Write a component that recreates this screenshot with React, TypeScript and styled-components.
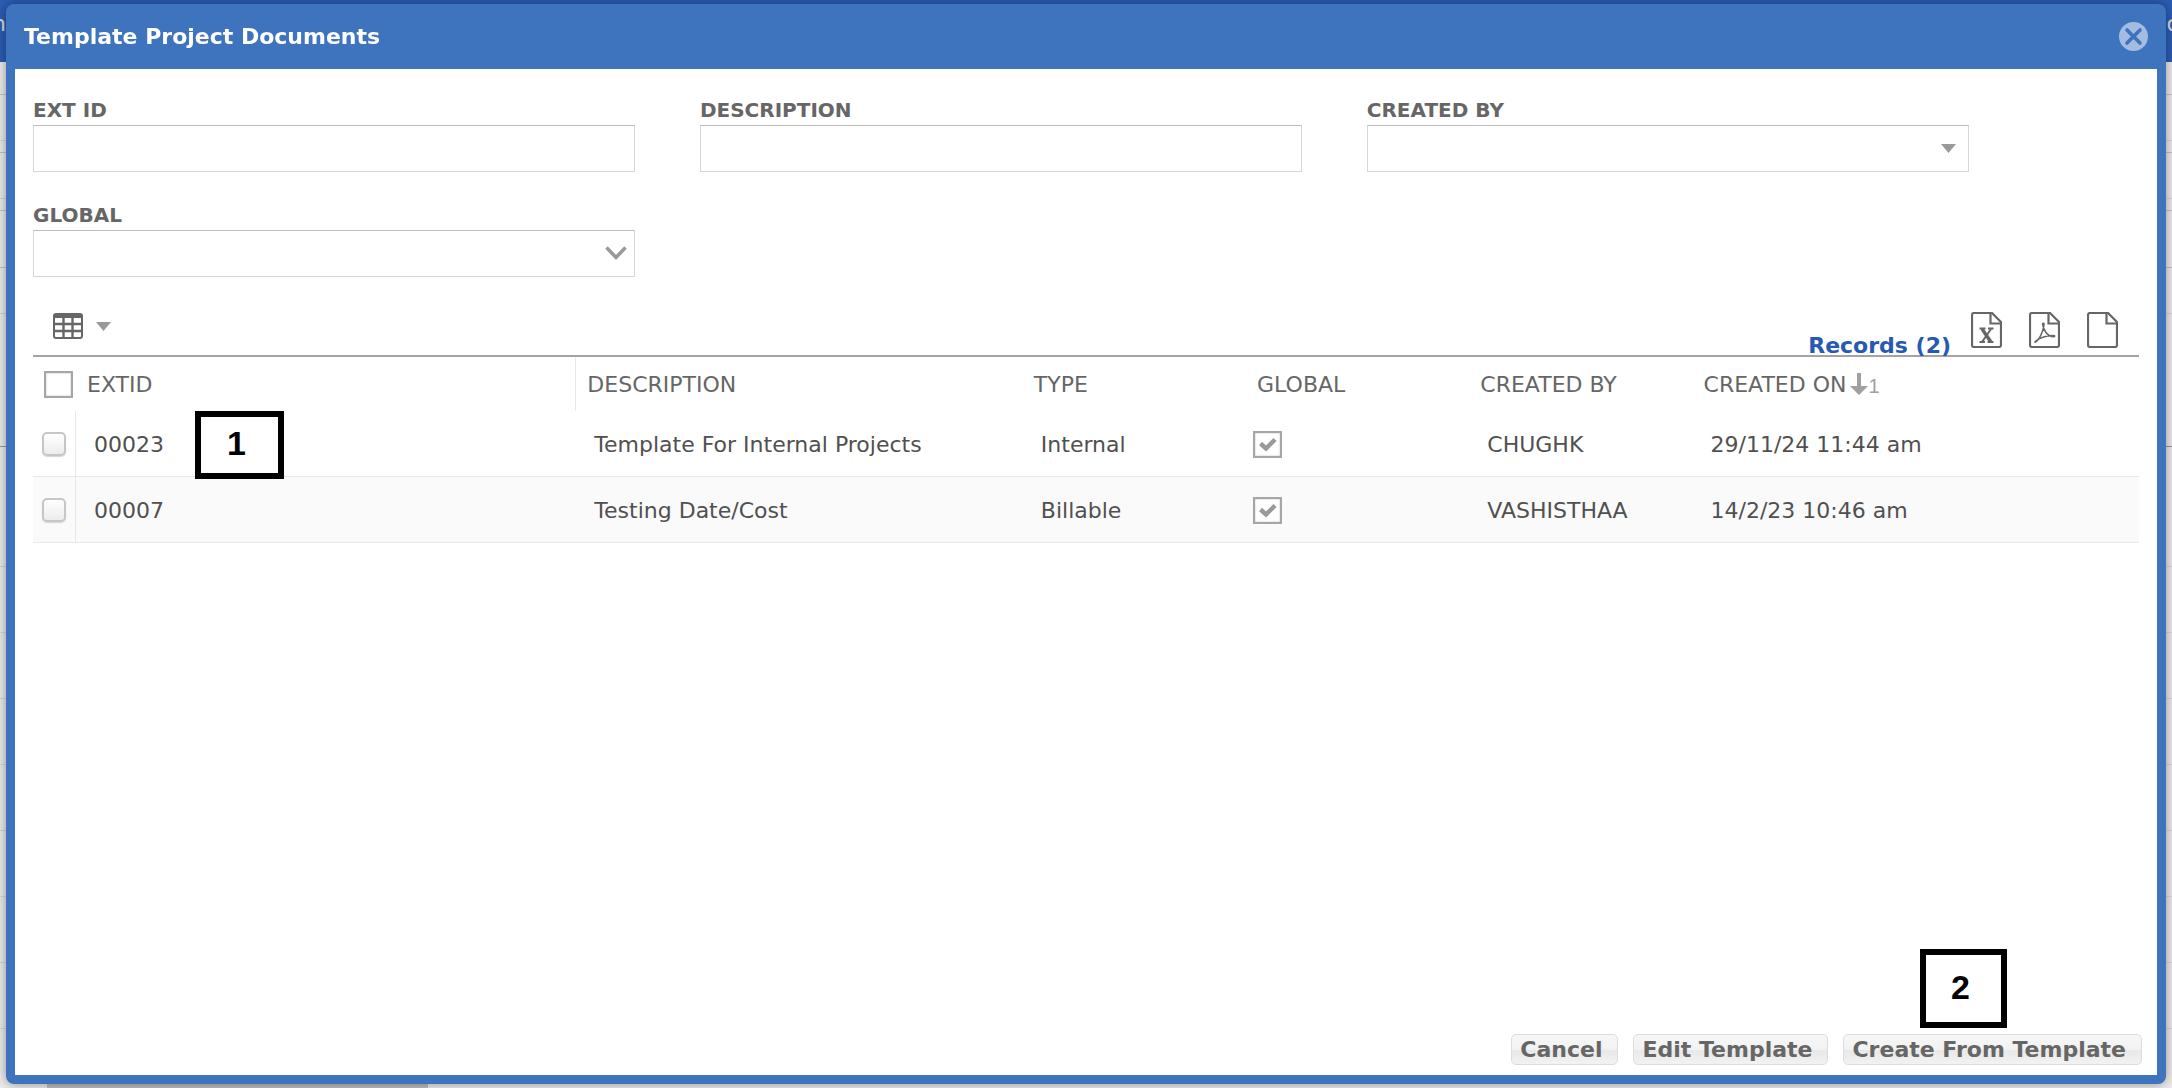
import React from "react";
import styled, { createGlobalStyle } from "styled-components";

const Global = createGlobalStyle`
  * { box-sizing: border-box; }
  body {
    margin: 0;
    overflow: hidden;
    font-family: Verdana, "DejaVu Sans", sans-serif;
    font-size: 22px;
    color: #505050;
    background: #ececec;
  }
  button, input, select { font: inherit; color: inherit; }
`;

/* ---------- page behind the dialog ---------- */
const Page = styled.div`
  height: 100vh;
  display: flex;
  flex-direction: column;
  overflow: hidden;
`;
const PageBar = styled.div`
  flex: none;
  display: flex;
  justify-content: space-between;
  height: 62px;
  margin: 0 -8px;
  padding-top: 10px;
  background: #2a5db5;
  line-height: 28px;
  color: #ddd;
`;
const PageLine = styled.div<{ $h: number; $c?: string }>`
  flex: none;
  height: ${(p) => p.$h}px;
  border-bottom: 1px solid ${(p) => p.$c || "#c4c4c4"};
`;
const PageScroll = styled.div`
  flex: none;
  width: 381px;
  height: 8px;
  margin: auto 0 0 47px;
  background: #bdbdbd;
`;

/* ---------- dialog frame ---------- */
const Dialog = styled.section`
  position: fixed;
  inset: 4px 6px;
  display: flex;
  flex-direction: column;
  padding: 0 9px 9px;
  border-radius: 8px;
  background: #3e73bd;
  box-shadow: 0 0 12px rgba(0, 0, 0, 0.4);
`;
const TitleBar = styled.header`
  flex: none;
  display: flex;
  align-items: center;
  justify-content: space-between;
  height: 65px;
  padding: 0 9px;
`;
const Title = styled.h1`
  margin: 0;
  font-size: 22px;
  line-height: 26px;
  font-weight: bold;
  color: #fff;
`;
const IconButton = styled.button`
  display: flex;
  align-items: center;
  gap: 13px;
  padding: 0;
  border: 0;
  background: none;
  cursor: pointer;
`;
const Body = styled.div`
  flex: 1;
  display: flex;
  flex-direction: column;
  padding: 29px 18px 0;
  background: #fff;
`;

/* ---------- filters ---------- */
const Filters = styled.form`
  display: grid;
  grid-template-columns: repeat(3, 1fr);
  gap: 31px 65px;
  width: 95%;
  padding-right: 65px;
`;
const Field = styled.label`
  display: grid;
  gap: 3px;
  font-size: 20px;
  line-height: 24px;
  font-weight: bold;
  color: #666;
`;
const Input = styled.input`
  width: 100%;
  height: 47px;
  padding: 0 10px;
  border: 1px solid #d6d6d6;
  border-top-color: #bdbdbd;
  border-radius: 0;
  background: #fff;
`;
const SelectBox = styled.span<{ $inset: number }>`
  display: grid;
  align-items: center;
  > * { grid-area: 1 / 1; }
  > svg {
    justify-self: end;
    margin-right: ${(p) => p.$inset}px;
    pointer-events: none;
  }
`;
const Select = styled(Input).attrs({ as: "select" })`
  appearance: none;
`;

/* ---------- list ---------- */
const Toolbar = styled.div`
  display: flex;
  align-items: flex-end;
  justify-content: space-between;
  height: 80px;
  padding: 0 21px 0 20px;
  border-bottom: 2px solid #a3a3a5;
`;
const ViewMenu = styled(IconButton)`
  margin-bottom: 16px;
`;
const Exports = styled.div`
  display: flex;
  align-items: flex-end;
  gap: 27px;
`;
const Records = styled.a`
  margin-right: -7px;
  font-weight: bold;
  line-height: 18px;
  color: #265ab2;
  text-decoration: none;
`;
const FileButton = styled(IconButton)`
  margin-bottom: 7px;
`;
const Table = styled.table`
  width: 100%;
  table-layout: fixed;
  border-spacing: 0;
`;
const Col = styled.col<{ $w?: string }>`
  width: ${(p) => p.$w || "auto"};
`;
const Th = styled.th<{ $split?: boolean }>`
  height: 54px;
  padding: 0 0 0 11px;
  border-right: ${(p) => (p.$split ? "1px solid #e8e8e8" : "0")};
  font-weight: normal;
  text-align: left;
  color: #666;
  white-space: nowrap;
`;
const HeadCell = styled.span<{ $gap: number }>`
  display: flex;
  align-items: center;
  gap: ${(p) => p.$gap}px;
`;
const Order = styled.span`
  display: inline-flex;
  align-items: flex-end;
  font-family: "Liberation Sans", Arial, sans-serif;
  font-size: 20px;
  line-height: 18px;
  color: #a0a0a0;
`;
const Row = styled.tr`
  &:nth-child(even) { background: #fafafa; }
`;
const Td = styled.td<{ $pick?: boolean; $tight?: boolean }>`
  position: relative;
  height: 66px;
  padding: 1px 0 0 ${(p) => (p.$pick ? 9 : p.$tight ? 7 : 18)}px;
  border-bottom: 1px solid #e8e8e8;
  border-right: ${(p) => (p.$pick ? "1px solid #e8e8e8" : "0")};
  white-space: nowrap;
`;
const Tick = styled.input.attrs({ type: "checkbox" })`
  appearance: none;
  display: block;
  width: 29px;
  height: 27px;
  margin: 0;
  border: 2px solid #a6a6a6;
  background: #fff;
  box-shadow: inset 0 0 2px #bbb;
`;
const RowTick = styled(Tick)`
  width: 24px;
  height: 24px;
  border: 2px solid #c6c6c6;
  border-radius: 5px;
  background: linear-gradient(#fff, #ececec);
  box-shadow: 0 1px 1px #d4d4d4;
`;
const Flag = styled.span`
  display: inline-grid;
  place-items: center;
  vertical-align: middle;
  > * { grid-area: 1 / 1; }
  > svg { pointer-events: none; }
`;

/* ---------- footer ---------- */
const Footer = styled.footer`
  flex: none;
  display: flex;
  justify-content: flex-end;
  gap: 15px;
  padding: 0 15px 10px;
  background: #fff;
`;
const Action = styled.button`
  height: 31px;
  padding: 0 15px 0 8px;
  border: 1px solid #dcdcdc;
  border-radius: 5px;
  background: linear-gradient(#f7f7f7, #f2f2f2 50%, #e8e8e8 51%, #f2f2f2);
  font-weight: bold;
  line-height: 28px;
  color: #666;
  white-space: nowrap;
`;
const Anchor = styled.div`
  position: relative;
`;

/* Numbered step markers lying over the dialog. */
const Marker = styled.span`
  position: absolute;
  display: grid;
  place-items: center;
  border: 6px solid #000;
  background: #fff;
  font-family: "Liberation Sans", Arial, sans-serif;
  font-size: 34px;
  font-weight: bold;
  line-height: 38px;
  color: #000;
  z-index: 1;
`;
const RowMarker = styled(Marker)`
  top: 0;
  left: 119px;
  width: 89px;
  height: 68px;
  padding: 0 6px 4px 0;
`;
const ActionMarker = styled(Marker)`
  right: 135px;
  bottom: 37px;
  width: 87px;
  height: 79px;
  padding: 0 6px 4px 0;
`;

const Caret = () => (
  <svg width="15" height="9" viewBox="0 0 15 9" aria-hidden="true">
    <path d="M0 0h15L7.500 9z" fill="#999" />
  </svg>
);
const Chevron = () => (
  <svg width="22" height="16" viewBox="0 0 22 16" aria-hidden="true">
    <path d="M1.500 1.500L11 11.500l9.500-10" fill="none" stroke="#999" strokeWidth="3.400" />
  </svg>
);
const CloseIcon = () => (
  <svg width="29" height="29" viewBox="0 0 29 29" aria-hidden="true">
    <circle cx="14.500" cy="14.500" r="14.500" fill="#a3bce0" />
    <path d="M8 8l13 13M21 8L8 21" stroke="#3e73bd" strokeWidth="3.600" strokeLinecap="round" />
  </svg>
);
const GridIcon = () => (
  <svg width="30" height="26" viewBox="0 0 30 26" aria-hidden="true">
    <rect x="1" y="1" width="28" height="24" rx="2" fill="#fff" stroke="#666" strokeWidth="2" />
    <path d="M1 3h28" stroke="#666" strokeWidth="4" />
    <path d="M1 11h28M1 18h28M10.500 4v21M19.500 4v21" stroke="#666" strokeWidth="2.400" />
  </svg>
);
const FileIcon = ({ kind }: { kind: "xls" | "pdf" | "blank" }) => (
  <svg width="31" height="36" viewBox="0 0 31 36" fill="none" stroke="#666" aria-hidden="true">
    <path d="M3 1h18l9 9v23a2 2 0 0 1-2 2H3a2 2 0 0 1-2-2V3a2 2 0 0 1 2-2z" strokeWidth="2.200" />
    <path d="M19.500 1v10.500H30" strokeWidth="2.200" />
    {kind === "xls" && (
      <>
        <path d="M11 17l9 13" strokeWidth="3.400" />
        <path d="M20 17l-9 13" strokeWidth="2" />
        <path d="M8.500 16.500h6M17 16.500h5.500M8.500 30h5.500M16.500 30h6" strokeWidth="2" />
      </>
    )}
    {kind === "pdf" && (
      <path
        d="M6.500 30c3-1.500 8-10 8.500-17.500.1-1.800-1.600-1.700-1.300.2.8 5.300 4.300 10.800 9.800 12 2.600.4 3-1.200.5-1.200-6 0-12.500 2-16.800 5.300-1.300 1-1.500 1.700-.7 1.200z"
        strokeWidth="1.600"
      />
    )}
  </svg>
);
const CheckMark = () => (
  <svg width="29" height="27" viewBox="0 0 29 27" aria-hidden="true">
    <path d="M7.500 12.500l5.500 5 9-9" fill="none" stroke="#999" strokeWidth="4.400" />
  </svg>
);
const SortArrow = () => (
  <svg width="18" height="22" viewBox="0 0 18 22" aria-hidden="true">
    <path d="M7 0h4v13h7l-9 9-9-9h7z" fill="#a0a0a0" />
  </svg>
);

const rows = [
  { id: "00023", text: "Template For Internal Projects", type: "Internal", by: "CHUGHK", on: "29/11/24 11:44 am", step: 1 },
  { id: "00007", text: "Testing Date/Cost", type: "Billable", by: "VASHISTHAA", on: "14/2/23 10:46 am" },
];

const light = "#d8d8d8";
const pageLines: [number, string?][] = [
  [33], [46, light], [12], [46, light], [12], [57], [46, light], [133, "#9a9a9a"],
  [120, light], [66, light], [66, light], [66, light], [66, light], [66, light], [66, light], [66, light],
];

export default function App() {
  return (
    <>
      <Global />
      <Page aria-hidden="true">
        <PageBar>
          <span>n</span>
          <span>o</span>
        </PageBar>
        {pageLines.map(([h, c], i) => (
          <PageLine key={i} $h={h} $c={c} />
        ))}
        <PageScroll />
      </Page>
      <Dialog role="dialog" aria-labelledby="dialog-title">
        <TitleBar>
          <Title id="dialog-title">Template Project Documents</Title>
          <IconButton type="button" aria-label="Close">
            <CloseIcon />
          </IconButton>
        </TitleBar>
        <Body>
          <Filters>
            <Field>
              EXT ID
              <Input type="text" name="extId" />
            </Field>
            <Field>
              DESCRIPTION
              <Input type="text" name="description" />
            </Field>
            <Field>
              CREATED BY
              <SelectBox $inset={13}>
                <Select name="createdBy" />
                <Caret />
              </SelectBox>
            </Field>
            <Field>
              GLOBAL
              <SelectBox $inset={8}>
                <Select name="global" />
                <Chevron />
              </SelectBox>
            </Field>
          </Filters>
          <Toolbar>
            <ViewMenu type="button" aria-label="View">
              <GridIcon />
              <Caret />
            </ViewMenu>
            <Exports>
              <Records href="#records">Records (2)</Records>
              <FileButton type="button" aria-label="Export to Excel"><FileIcon kind="xls" /></FileButton>
              <FileButton type="button" aria-label="Export to PDF"><FileIcon kind="pdf" /></FileButton>
              <FileButton type="button" aria-label="New document"><FileIcon kind="blank" /></FileButton>
            </Exports>
          </Toolbar>
          <Table>
            <colgroup>
              <Col $w="43px" />
              <Col />
              <Col $w="21.2%" />
              <Col $w="10.6%" />
              <Col $w="10.6%" />
              <Col $w="10.6%" />
              <Col $w="21.2%" />
            </colgroup>
            <thead>
              <tr>
                <Th colSpan={2} $split>
                  <HeadCell $gap={14}>
                    <Tick aria-label="Select all" />
                    EXTID
                  </HeadCell>
                </Th>
                <Th>DESCRIPTION</Th>
                <Th>TYPE</Th>
                <Th>GLOBAL</Th>
                <Th>CREATED BY</Th>
                <Th>
                  <HeadCell $gap={4}>
                    CREATED ON
                    <Order><SortArrow />1</Order>
                  </HeadCell>
                </Th>
              </tr>
            </thead>
            <tbody>
              {rows.map((r) => (
                <Row key={r.id}>
                  <Td $pick><RowTick aria-label={"Select " + r.id} /></Td>
                  <Td>
                    {r.id}
                    {r.step && <RowMarker>{r.step}</RowMarker>}
                  </Td>
                  <Td>{r.text}</Td>
                  <Td>{r.type}</Td>
                  <Td $tight>
                    <Flag>
                      <Tick defaultChecked aria-label={"Global " + r.id} />
                      <CheckMark />
                    </Flag>
                  </Td>
                  <Td>{r.by}</Td>
                  <Td>{r.on}</Td>
                </Row>
              ))}
            </tbody>
          </Table>
        </Body>
        <Footer>
          <Action type="button">Cancel</Action>
          <Action type="button">Edit Template</Action>
          <Anchor>
            <Action type="button">Create From Template</Action>
            <ActionMarker>2</ActionMarker>
          </Anchor>
        </Footer>
      </Dialog>
    </>
  );
}
